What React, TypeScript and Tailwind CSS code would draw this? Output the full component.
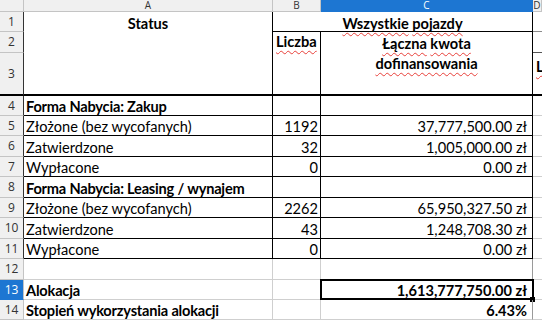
import React from 'react'

const wave = 'underline decoration-wavy decoration-[#e8403a] decoration-1 underline-offset-[3px]'

function Sp(props: { children: React.ReactNode }) {
  return <span className={wave}>{props.children}</span>
}

function ColHead(props: { label: string; active?: boolean }) {
  return (
    <div
      className={
        'flex items-center justify-center border-b border-r text-[10px] leading-[11px] font-["Open_Sans",sans-serif] ' +
        (props.active ? 'bg-[#1d76d2] border-[#1d76d2] text-white' : 'bg-[#f0f0f0] border-[#c4c4c4] text-[#333]')
      }
    >
      {props.label}
    </div>
  )
}

function RowHead(props: { n: number; active?: boolean; dark?: boolean; className?: string }) {
  return (
    <div
      className={
        'flex items-center justify-center border-b border-r text-[12px] font-["Open_Sans",sans-serif] ' +
        (props.active
          ? 'bg-[#1d76d2] border-b-[#1d76d2] text-white '
          : 'bg-[#f0f0f0] border-b-[#c4c4c4] text-[#333] ') +
        (props.dark ? 'border-r-[#333] ' : 'border-r-[#c4c4c4] ') +
        (props.className ?? '')
      }
    >
      {props.n}
    </div>
  )
}

type Row = {
  n: number
  label: React.ReactNode
  bold?: boolean
  count?: string
  amount?: string
  boxed?: boolean
  ruled: boolean
}

const rows: Row[] = [
  { n: 4, label: <>Forma <Sp>Nabycia</Sp>: <Sp>Zakup</Sp></>, bold: true, ruled: true },
  { n: 5, label: <><Sp>Złożone</Sp> (bez <Sp>wycofanych</Sp>)</>, count: '1192', amount: '37,777,500.00 zł', ruled: true },
  { n: 6, label: <Sp>Zatwierdzone</Sp>, count: '32', amount: '1,005,000.00 zł', ruled: true },
  { n: 7, label: <Sp>Wypłacone</Sp>, count: '0', amount: '0.00 zł', ruled: true },
  { n: 8, label: <>Forma <Sp>Nabycia</Sp>: Leasing / <Sp>wynajem</Sp></>, bold: true, ruled: true },
  { n: 9, label: <><Sp>Złożone</Sp> (bez <Sp>wycofanych</Sp>)</>, count: '2262', amount: '65,950,327.50 zł', ruled: true },
  { n: 10, label: <Sp>Zatwierdzone</Sp>, count: '43', amount: '1,248,708.30 zł', ruled: true },
  { n: 11, label: <Sp>Wypłacone</Sp>, count: '0', amount: '0.00 zł', ruled: true },
  { n: 12, label: null, ruled: false },
  { n: 13, label: <Sp>Alokacja</Sp>, bold: true, amount: '1,613,777,750.00 zł', boxed: true, ruled: false },
  { n: 14, label: <><Sp>Stopień</Sp> <Sp>wykorzystania</Sp> <Sp>alokacji</Sp></>, bold: true, amount: '6.43%', ruled: false },
]

export default function App() {
  const line = (r: Row) => (r.ruled ? 'border-black' : 'border-[#cfcfcf]')
  return (
    <div className="h-[320px] w-[542px] overflow-hidden bg-white font-['Lato','Liberation_Sans',sans-serif] text-[14.6px] text-black">
      <div className="grid grid-cols-[24px_249px_48px_212px_1fr] grid-rows-[12px_20px_21px_43px_20px_20px_21px_20px_21px_20px_21px_20px_21px_20px_20px]">
        {/* column headers */}
        <div className="border-b border-r border-[#c4c4c4] bg-[#f0f0f0]" />
        <ColHead label="A" />
        <ColHead label="B" />
        <ColHead label="C" active />
        <ColHead label="D" />

        {/* header block rows 1-3 */}
        <RowHead n={1} dark className="col-start-1 row-start-2" />
        <RowHead n={2} dark className="col-start-1 row-start-3" />
        <RowHead n={3} dark className="col-start-1 row-start-4 border-b-2 border-b-black" />

        <div className="col-start-2 row-start-2 row-span-3 border-b-2 border-r border-black pt-[3px] text-center font-bold leading-[18px]">
          Status
        </div>
        <div className="col-span-2 col-start-3 row-start-2 border-b border-r border-black pt-[3px] text-center font-bold leading-[18px]">
          <Sp>Wszystkie</Sp> <Sp>pojazdy</Sp>
        </div>
        <div className="col-start-3 row-span-2 row-start-3 border-b-2 border-r border-black pl-[3px] pt-[1px] font-bold leading-[18px]">
          <Sp>Liczba</Sp>
        </div>
        <div className="col-start-4 row-span-2 row-start-3 border-b-2 border-r border-black pt-[2px] text-center font-bold leading-[20px]">
          <Sp>Łączna</Sp> <Sp>kwota</Sp>
          <br />
          <Sp>dofinansowania</Sp>
        </div>
        <div className="col-start-5 row-start-2 border-b border-[#8a8a8a]" />
        <div className="col-start-5 row-start-3 border-b border-[#555]" />
        <div className="col-start-5 row-start-4 overflow-hidden border-b-2 border-black pl-[3px] pt-[5px] font-bold leading-[18px]">
          <Sp>L</Sp>
        </div>

        {/* body rows */}
        {rows.map((r) => (
          <React.Fragment key={r.n}>
            <RowHead n={r.n} active={r.n === 13} dark={r.ruled} />
            <div
              className={
                'flex items-end overflow-hidden whitespace-nowrap border-b border-r pl-[2px] leading-[16px] ' +
                line(r) +
                (r.bold ? ' font-bold tracking-[-0.2px]' : '')
              }
            >
              <span>{r.label}</span>
            </div>
            <div className={'flex items-end justify-end border-b border-r pr-[2px] leading-[16px] ' + line(r)}>
              <span>{r.count ?? ''}</span>
            </div>
            <div
              className={
                'relative flex items-end justify-end border-b border-r pr-[5px] leading-[16px] ' +
                (r.ruled ? 'border-black' : 'border-b-[#cfcfcf] border-r-[#9a9a9a]') +
                (r.bold ? ' font-bold' : '')
              }
            >
              <span>{r.amount ?? ''}</span>
              {r.boxed ? (
                <>
                  <div className="pointer-events-none absolute -left-[1px] -top-[1px] -right-[2px] -bottom-[1px] border-2 border-black" />
                  <div className="absolute -bottom-[3px] -right-[3px] h-[5px] w-[5px] bg-black" />
                </>
              ) : null}
            </div>
            <div className="border-b border-[#cfcfcf]" />
          </React.Fragment>
        ))}
      </div>
    </div>
  )
}
